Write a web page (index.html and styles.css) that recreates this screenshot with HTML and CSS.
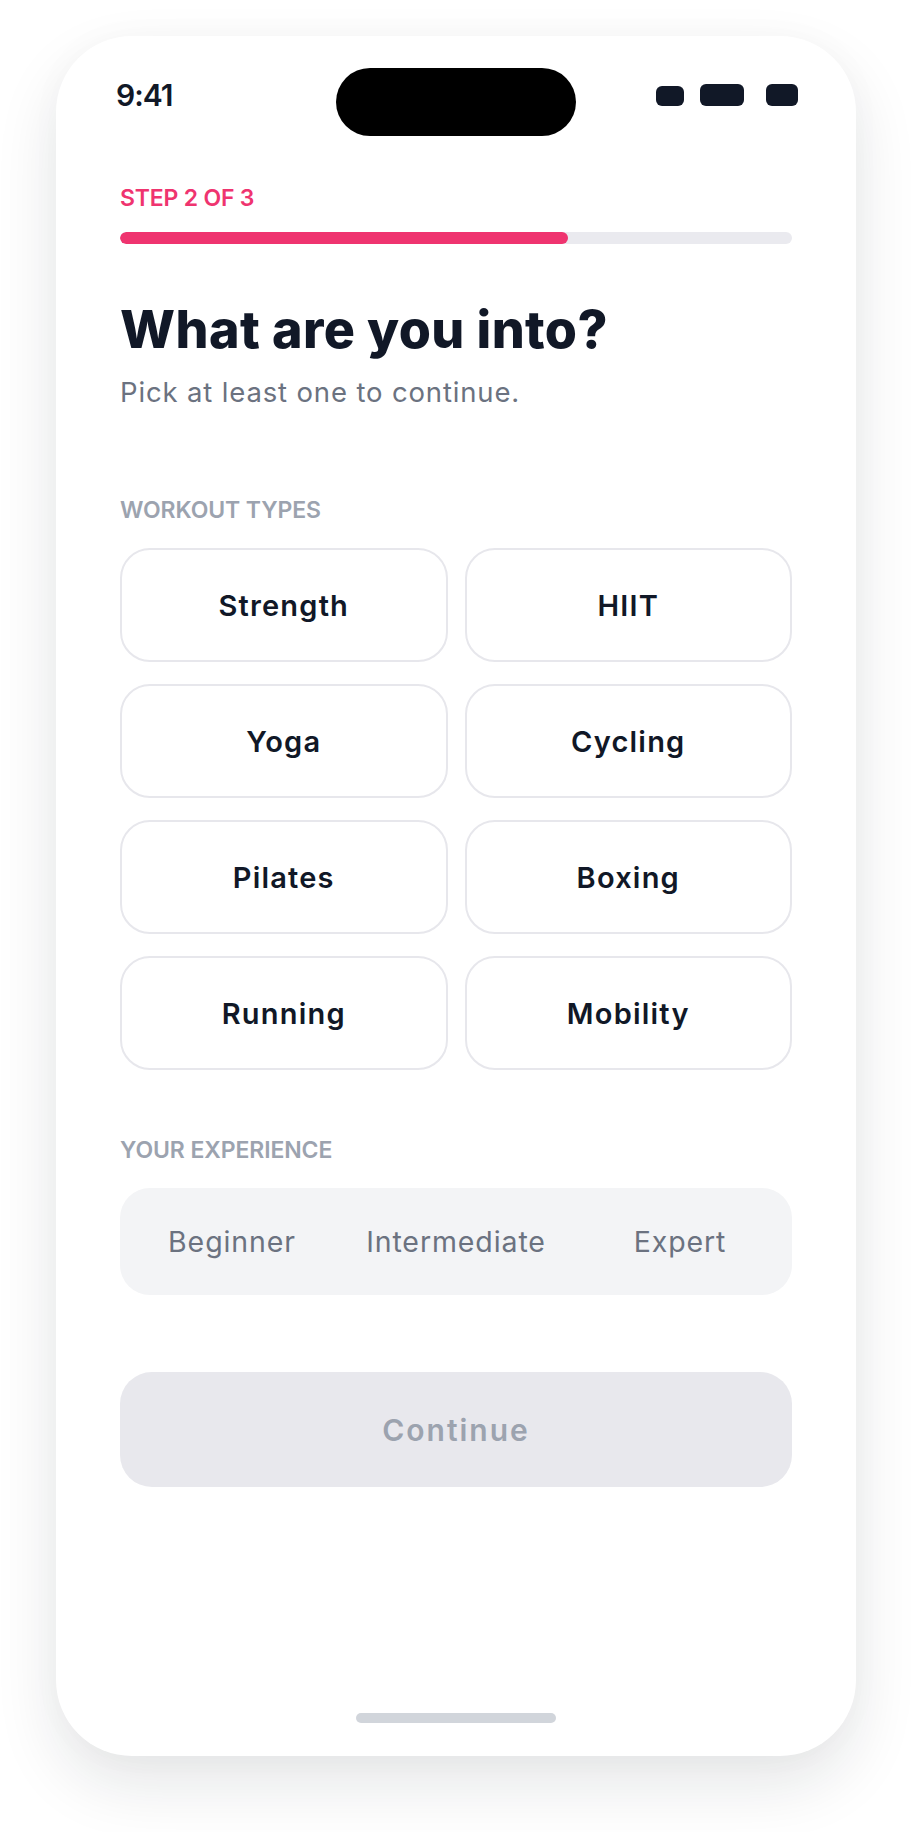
FILE: index.html
```html
<!DOCTYPE html>
<html lang="en">
<head>
<meta charset="utf-8">
<title>What are you into?</title>
<link rel="stylesheet" href="styles.css">
</head>
<body>
<div class="phone">
  <div class="status">
    <span class="time">9:41</span>
    <div class="island"></div>
    <div class="sys">
      <span class="sys-signal"></span>
      <span class="sys-wifi"></span>
      <span class="sys-battery"></span>
    </div>
  </div>
  <main class="content">
    <div class="step">STEP 2 OF 3</div>
    <div class="progress"><div class="progress-fill" style="width:66.667%"></div></div>
    <h1 class="title">What are you into?</h1>
    <p class="subtitle">Pick at least one to continue.</p>

    <div class="section-label">WORKOUT TYPES</div>
    <div class="chips">
      <div class="chip">Strength</div>
      <div class="chip">HIIT</div>
      <div class="chip">Yoga</div>
      <div class="chip">Cycling</div>
      <div class="chip">Pilates</div>
      <div class="chip">Boxing</div>
      <div class="chip">Running</div>
      <div class="chip">Mobility</div>
    </div>

    <div class="section-label section-label-exp">YOUR EXPERIENCE</div>
    <div class="segmented">
      <div class="seg">Beginner</div>
      <div class="seg">Intermediate</div>
      <div class="seg">Expert</div>
    </div>

    <div class="continue">Continue</div>
  </main>
  <div class="home-indicator"></div>
</div>
</body>
</html>
```

FILE: styles.css
```css
* {
  box-sizing: border-box;
}

html, body {
  margin: 0;
  padding: 0;
  background: #ffffff;
}

body {
  min-height: 1832px;
  padding: 36px 0 76px;
  font-family: "Inter", "Noto Sans", "DejaVu Sans", sans-serif;
  color: #111827;
}

.phone {
  width: 800px;
  height: 1720px;
  margin: 0 auto;
  background: #ffffff;
  border-radius: 76px;
  box-shadow: 0 28px 64px rgba(17, 24, 39, 0.11), 0 0 36px rgba(17, 24, 39, 0.025);
  padding-top: 32px;
  display: flex;
  flex-direction: column;
}

/* Status bar */
.status {
  display: grid;
  grid-template-columns: 1fr 240px 1fr;
  align-items: start;
  padding: 0 58px;
  height: 68px;
}

.time {
  margin-top: 12px;
  padding-left: 2px;
  font-size: 30px;
  line-height: 30px;
  font-weight: 600;
  letter-spacing: -1px;
  color: #111827;
}

.island {
  width: 240px;
  height: 68px;
  background: #000000;
  border-radius: 34px;
}

.sys {
  justify-self: end;
  margin-top: 16px;
  display: flex;
  align-items: flex-end;
  height: 22px;
}

.sys-signal,
.sys-wifi,
.sys-battery {
  display: block;
  background: #111827;
  border-radius: 6px;
}

.sys-signal {
  width: 28px;
  height: 20px;
}

.sys-wifi {
  width: 44px;
  height: 22px;
  margin-left: 16px;
}

.sys-battery {
  width: 32px;
  height: 22px;
  margin-left: 22px;
}

/* Content */
.content {
  padding: 0 64px;
  display: flex;
  flex-direction: column;
}

.step {
  margin-top: 48px;
  font-size: 23px;
  line-height: 28px;
  font-weight: 600;
  letter-spacing: -0.2px;
  color: #ef346f;
}

.progress {
  margin-top: 20px;
  height: 12px;
  border-radius: 6px;
  background: #eaeaef;
  overflow: hidden;
}

.progress-fill {
  height: 100%;
  border-radius: 6px;
  background: #ef346f;
}

.title {
  margin: 56px 0 0;
  font-size: 52px;
  line-height: 60px;
  font-weight: 800;
  letter-spacing: 0.4px;
  color: #111827;
}

.subtitle {
  margin: 14px 0 0;
  font-size: 27.5px;
  line-height: 36px;
  font-weight: 400;
  letter-spacing: 0.85px;
  color: #6b7280;
}

.section-label {
  margin-top: 86px;
  font-size: 23px;
  line-height: 28px;
  font-weight: 600;
  letter-spacing: -0.1px;
  color: #9ca3af;
}

.section-label-exp {
  margin-top: 66px;
}

.chips {
  margin-top: 24px;
  display: grid;
  grid-template-columns: 1fr 1fr;
  column-gap: 17px;
  row-gap: 22px;
}

.chip {
  height: 114px;
  border: 2.5px solid #e7e7ec;
  border-radius: 30px;
  display: flex;
  align-items: center;
  justify-content: center;
  font-size: 29px;
  font-weight: 600;
  letter-spacing: 1.2px;
  color: #111827;
  background: #ffffff;
}

.segmented {
  margin-top: 24px;
  height: 107px;
  border-radius: 30px;
  background: #f3f4f6;
  display: flex;
  align-items: center;
}

.seg {
  flex: 1;
  text-align: center;
  font-size: 28.5px;
  font-weight: 400;
  letter-spacing: 0.9px;
  color: #6b7280;
}

.continue {
  margin-top: 77px;
  height: 115px;
  border-radius: 32px;
  background: #e8e8ed;
  display: flex;
  align-items: center;
  justify-content: center;
  font-size: 30px;
  font-weight: 600;
  letter-spacing: 2px;
  color: #9ca3af;
}

.home-indicator {
  margin: auto auto 33px;
  width: 200px;
  height: 10px;
  border-radius: 5px;
  background: #d1d5db;
}
```
